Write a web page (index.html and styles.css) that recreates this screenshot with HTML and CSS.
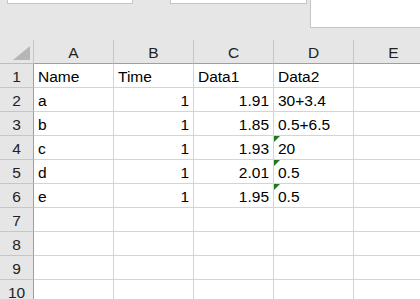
FILE: index.html
```html
<!DOCTYPE html>
<html lang="en">
<head>
    <meta charset="UTF-8">
    <title>Sheet1</title>
    <link rel="stylesheet" href="styles.css">
</head>
<body>
    <div class="toolbar">
        <div class="name-box"></div>
        <div class="func-box"></div>
        <div class="formula-box"></div>
    </div>

    <div class="sheet">
        <div class="corner">
            <svg width="17" height="14" viewBox="0 0 17 14"><polygon points="17,0 17,14 0,14" fill="#b6b6b6"/></svg>
        </div>
        <div class="col-head">A</div>
        <div class="col-head">B</div>
        <div class="col-head">C</div>
        <div class="col-head">D</div>
        <div class="col-head">E</div>

        <div class="row-head">1</div>
        <div class="cell">Name</div>
        <div class="cell">Time</div>
        <div class="cell">Data1</div>
        <div class="cell">Data2</div>
        <div class="cell"></div>

        <div class="row-head">2</div>
        <div class="cell">a</div>
        <div class="cell num">1</div>
        <div class="cell num">1.91</div>
        <div class="cell">30+3.4</div>
        <div class="cell"></div>

        <div class="row-head">3</div>
        <div class="cell">b</div>
        <div class="cell num">1</div>
        <div class="cell num">1.85</div>
        <div class="cell">0.5+6.5</div>
        <div class="cell"></div>

        <div class="row-head">4</div>
        <div class="cell">c</div>
        <div class="cell num">1</div>
        <div class="cell num">1.93</div>
        <div class="cell flagged">20</div>
        <div class="cell"></div>

        <div class="row-head">5</div>
        <div class="cell">d</div>
        <div class="cell num">1</div>
        <div class="cell num">2.01</div>
        <div class="cell flagged">0.5</div>
        <div class="cell"></div>

        <div class="row-head">6</div>
        <div class="cell">e</div>
        <div class="cell num">1</div>
        <div class="cell num">1.95</div>
        <div class="cell flagged">0.5</div>
        <div class="cell"></div>

        <div class="row-head">7</div>
        <div class="cell"></div><div class="cell"></div><div class="cell"></div><div class="cell"></div><div class="cell"></div>

        <div class="row-head">8</div>
        <div class="cell"></div><div class="cell"></div><div class="cell"></div><div class="cell"></div><div class="cell"></div>

        <div class="row-head">9</div>
        <div class="cell"></div><div class="cell"></div><div class="cell"></div><div class="cell"></div><div class="cell"></div>

        <div class="row-head">10</div>
        <div class="cell"></div><div class="cell"></div><div class="cell"></div><div class="cell"></div><div class="cell"></div>
    </div>
</body>
</html>
```

FILE: styles.css
```css
body {
    margin: 0;
    background: #e6e6e6;
    font-family: "Liberation Sans", Arial, sans-serif;
    font-size: 15.5px;
    color: #000;
    height: 299px;
    overflow: hidden;
}

/* formula bar strip */
.toolbar {
    display: flex;
    align-items: flex-start;
    height: 40px;
}

.name-box, .func-box, .formula-box {
    background: #fff;
    box-sizing: border-box;
    border: 1px solid #c6c6c6;
    border-top: none;
}

.name-box {
    margin-left: 7px;
    width: 126px;
    height: 4px;
}

.func-box {
    margin-left: 37px;
    width: 137px;
    height: 4px;
}

.formula-box {
    margin-left: 3px;
    flex: 1;
    height: 28px;
    border-right: none;
}

/* grid */
.sheet {
    display: grid;
    grid-template-columns: 34px repeat(5, 80px);
    grid-auto-rows: 24px;
}

.sheet > div {
    box-sizing: border-box;
    padding-top: 2px;
    line-height: 21px;
    white-space: nowrap;
    overflow: hidden;
}

.corner {
    border-right: 1px solid #c6c6c6;
    border-bottom: 1px solid #bdbdbd;
    display: flex;
    justify-content: flex-end;
    align-items: flex-end;
    padding: 0 3px 3px 0 !important;
}

.corner svg {
    display: block;
}

.col-head {
    text-align: center;
    border-right: 1px solid #c6c6c6;
    border-bottom: 1px solid #9e9e9e;
    color: #222;
}

.row-head {
    text-align: center;
    border-right: 1px solid #9e9e9e;
    border-bottom: 1px solid #c6c6c6;
    color: #222;
}

.cell {
    background: #fff;
    border-right: 1px solid #d4d4d4;
    border-bottom: 1px solid #d4d4d4;
    padding-left: 4px;
    padding-right: 4px;
}

.num {
    text-align: right;
}

.flagged {
    position: relative;
}

.flagged::before {
    content: "";
    position: absolute;
    top: 0;
    left: 0;
    border-top: 6px solid #1f7a1f;
    border-right: 6px solid transparent;
}
```
